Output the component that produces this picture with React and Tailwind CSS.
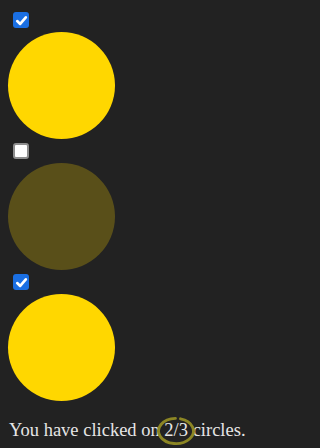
import { useState } from "react";

const Check = ({ checked, onChange }) => (
  <button
    type="button"
    role="checkbox"
    aria-checked={checked}
    onClick={onChange}
    className={`ml-[5px] flex h-4 w-4 items-center justify-center rounded-[3px] ${
      checked
        ? "bg-[#1a6fe3]"
        : "border-2 border-[#8e8e8e] bg-white"
    }`}
  >
    {checked && (
      <svg viewBox="0 0 16 16" className="h-[15px] w-[15px]">
        <path
          d="M3.4 8.6 L6.6 11.7 L12.6 4.6"
          fill="none"
          stroke="white"
          strokeWidth="2.8"
          strokeLinecap="round"
          strokeLinejoin="round"
        />
      </svg>
    )}
  </button>
);

export default function App() {
  const [circles, setCircles] = useState([true, false, true]);
  const count = circles.filter(Boolean).length;

  const toggle = (i) =>
    setCircles((prev) => prev.map((c, j) => (j === i ? !c : c)));

  return (
    <div className="min-h-[448px] bg-[#222222] pl-2 pt-3 font-['Liberation_Serif',serif] text-[#e6e6e6]">
      {circles.map((on, i) => (
        <div key={i} className="flex flex-col pb-1">
          <Check checked={on} onChange={() => toggle(i)} />
          <div
            className={`mt-1 h-[107px] w-[107px] rounded-full bg-[#ffd700] ${
              on ? "" : "opacity-25"
            }`}
          />
        </div>
      ))}

      <p className="mt-[15px] pl-[1px] text-[18.5px] leading-[21px]">
        You have clicked on{" "}
        <span className="relative inline-block">
          {count}/{circles.length}
          <svg
            viewBox="0 0 42 32"
            className="absolute left-1/2 top-1/2 h-[31px] w-[42px] -translate-x-1/2 -translate-y-1/2"
          >
            <path
              d="M25.66 3.44 A18 13 0 1 1 20.37 3.0"
              fill="none"
              stroke="#8c8624"
              strokeWidth="3"
              strokeLinecap="round"
            />
          </svg>
        </span>{" "}
        circles.
      </p>
    </div>
  );
}
